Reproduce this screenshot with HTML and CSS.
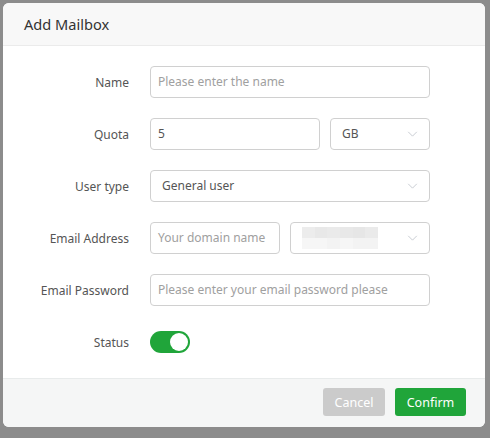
FILE: index.html
```html
<!DOCTYPE html>
<html>
<head>
<meta charset="utf-8">
<link rel="stylesheet" href="styles.css">
</head>
<body>
<div class="dialog">
  <div class="header">Add Mailbox</div>
  <div class="body">
    <div class="row">
      <label class="label">Name</label>
      <div class="field"><div class="input placeholder full">Please enter the name</div></div>
    </div>
    <div class="row">
      <label class="label">Quota</label>
      <div class="field">
        <div class="input quota">5</div>
        <div class="input select unit"><span>GB</span><svg class="chev" viewBox="0 0 12 7" width="11" height="6"><path d="M1 1l5 5 5-5" fill="none" stroke="#c0c4cc" stroke-width="1"/></svg></div>
      </div>
    </div>
    <div class="row">
      <label class="label">User type</label>
      <div class="field"><div class="input select full"><span>General user</span><svg class="chev" viewBox="0 0 12 7" width="11" height="6"><path d="M1 1l5 5 5-5" fill="none" stroke="#c0c4cc" stroke-width="1"/></svg></div></div>
    </div>
    <div class="row">
      <label class="label">Email Address</label>
      <div class="field">
        <div class="input placeholder domain">Your domain name</div>
        <div class="input select dsel">
          <div class="blur">
            <i class="b1"></i><i class="b2"></i><i class="b3"></i><i class="b2"></i><i class="b4"></i><i class="b3"></i>
            <i class="b5"></i><i class="b5"></i><i class="b6"></i><i class="b5"></i><i class="b6"></i><i class="b6"></i>
          </div>
          <svg class="chev" viewBox="0 0 12 7" width="11" height="6"><path d="M1 1l5 5 5-5" fill="none" stroke="#c0c4cc" stroke-width="1"/></svg>
        </div>
      </div>
    </div>
    <div class="row">
      <label class="label">Email Password</label>
      <div class="field"><div class="input placeholder full">Please enter your email password please</div></div>
    </div>
    <div class="row">
      <label class="label">Status</label>
      <div class="field"><div class="switch"><div class="knob"></div></div></div>
    </div>
  </div>
  <div class="footer">
    <button class="btn cancel">Cancel</button>
    <button class="btn confirm">Confirm</button>
  </div>
</div>
</body>
</html>
```
FILE: styles.css
```css
* { box-sizing: border-box; }
html, body { margin: 0; padding: 0; }
body {
  background: #8c8c8c;
  width: 490px;
  height: 438px;
  padding: 3px 0 0 3px;
  font-family: "Noto Sans", "Open Sans", sans-serif;
}
.dialog {
  width: 482px;
  height: 424px;
  background: #fff;
  border-radius: 6px;
  overflow: hidden;
  display: flex;
  flex-direction: column;
}
.header {
  height: 43px;
  background: #f8f8f8;
  border-bottom: 1px solid #ebebeb;
  padding-left: 21px;
  font-size: 14.6px;
  line-height: 42px;
  color: #333;
}
.body {
  flex: 1;
  padding-top: 20px;
  display: flex;
  flex-direction: column;
  gap: 20px;
}
.row {
  display: flex;
  align-items: center;
  height: 32px;
}
.label {
  width: 126px;
  text-align: right;
  font-size: 12px;
  color: #555;
}
.field {
  margin-left: 21px;
  display: flex;
  gap: 10px;
  align-items: center;
}
.input {
  height: 32px;
  border: 1px solid #d0d0d0;
  border-radius: 4px;
  font-size: 12px;
  color: #555;
  padding: 0 7px;
  line-height: 30px;
  display: flex;
  align-items: center;
  white-space: nowrap;
}
.placeholder { color: #a0a0a0; }
.full { width: 280px; }
.quota { width: 170px; }
.unit { width: 100px; }
.domain { width: 130px; }
.dsel { width: 140px; }
.select { justify-content: space-between; padding: 0 11px 0 11px; }
.chev { flex: none; }
.blur {
  width: 76px;
  height: 22px;
  display: grid;
  grid-template-columns: repeat(6, 1fr);
  grid-template-rows: 1fr 1fr;
}
.blur i { display: block; }
.b1 { background: #ececec; }
.b2 { background: #e8e8e8; }
.b3 { background: #eaeaea; }
.b4 { background: #e6e6e6; }
.b5 { background: #f6f6f6; }
.b6 { background: #f3f3f3; }
.switch {
  width: 40px;
  height: 22px;
  border-radius: 11px;
  background: #20a53a;
  position: relative;
}
.knob {
  position: absolute;
  right: 2px;
  top: 2px;
  width: 18px;
  height: 18px;
  border-radius: 50%;
  background: #fff;
}
.footer {
  height: 49px;
  background: #f5f6f6;
  border-top: 1px solid #e8ebeb;
  display: flex;
  justify-content: flex-end;
  align-items: center;
  gap: 10px;
  padding-right: 19px;
  padding-bottom: 2px;
}
.btn {
  height: 28px;
  border: none;
  border-radius: 3px;
  color: #fff;
  font-family: inherit;
  font-size: 12.5px;
  padding: 0;
}
.cancel { width: 62px; background: #cbcbcb; }
.confirm { width: 71px; background: #20a53a; }
```
